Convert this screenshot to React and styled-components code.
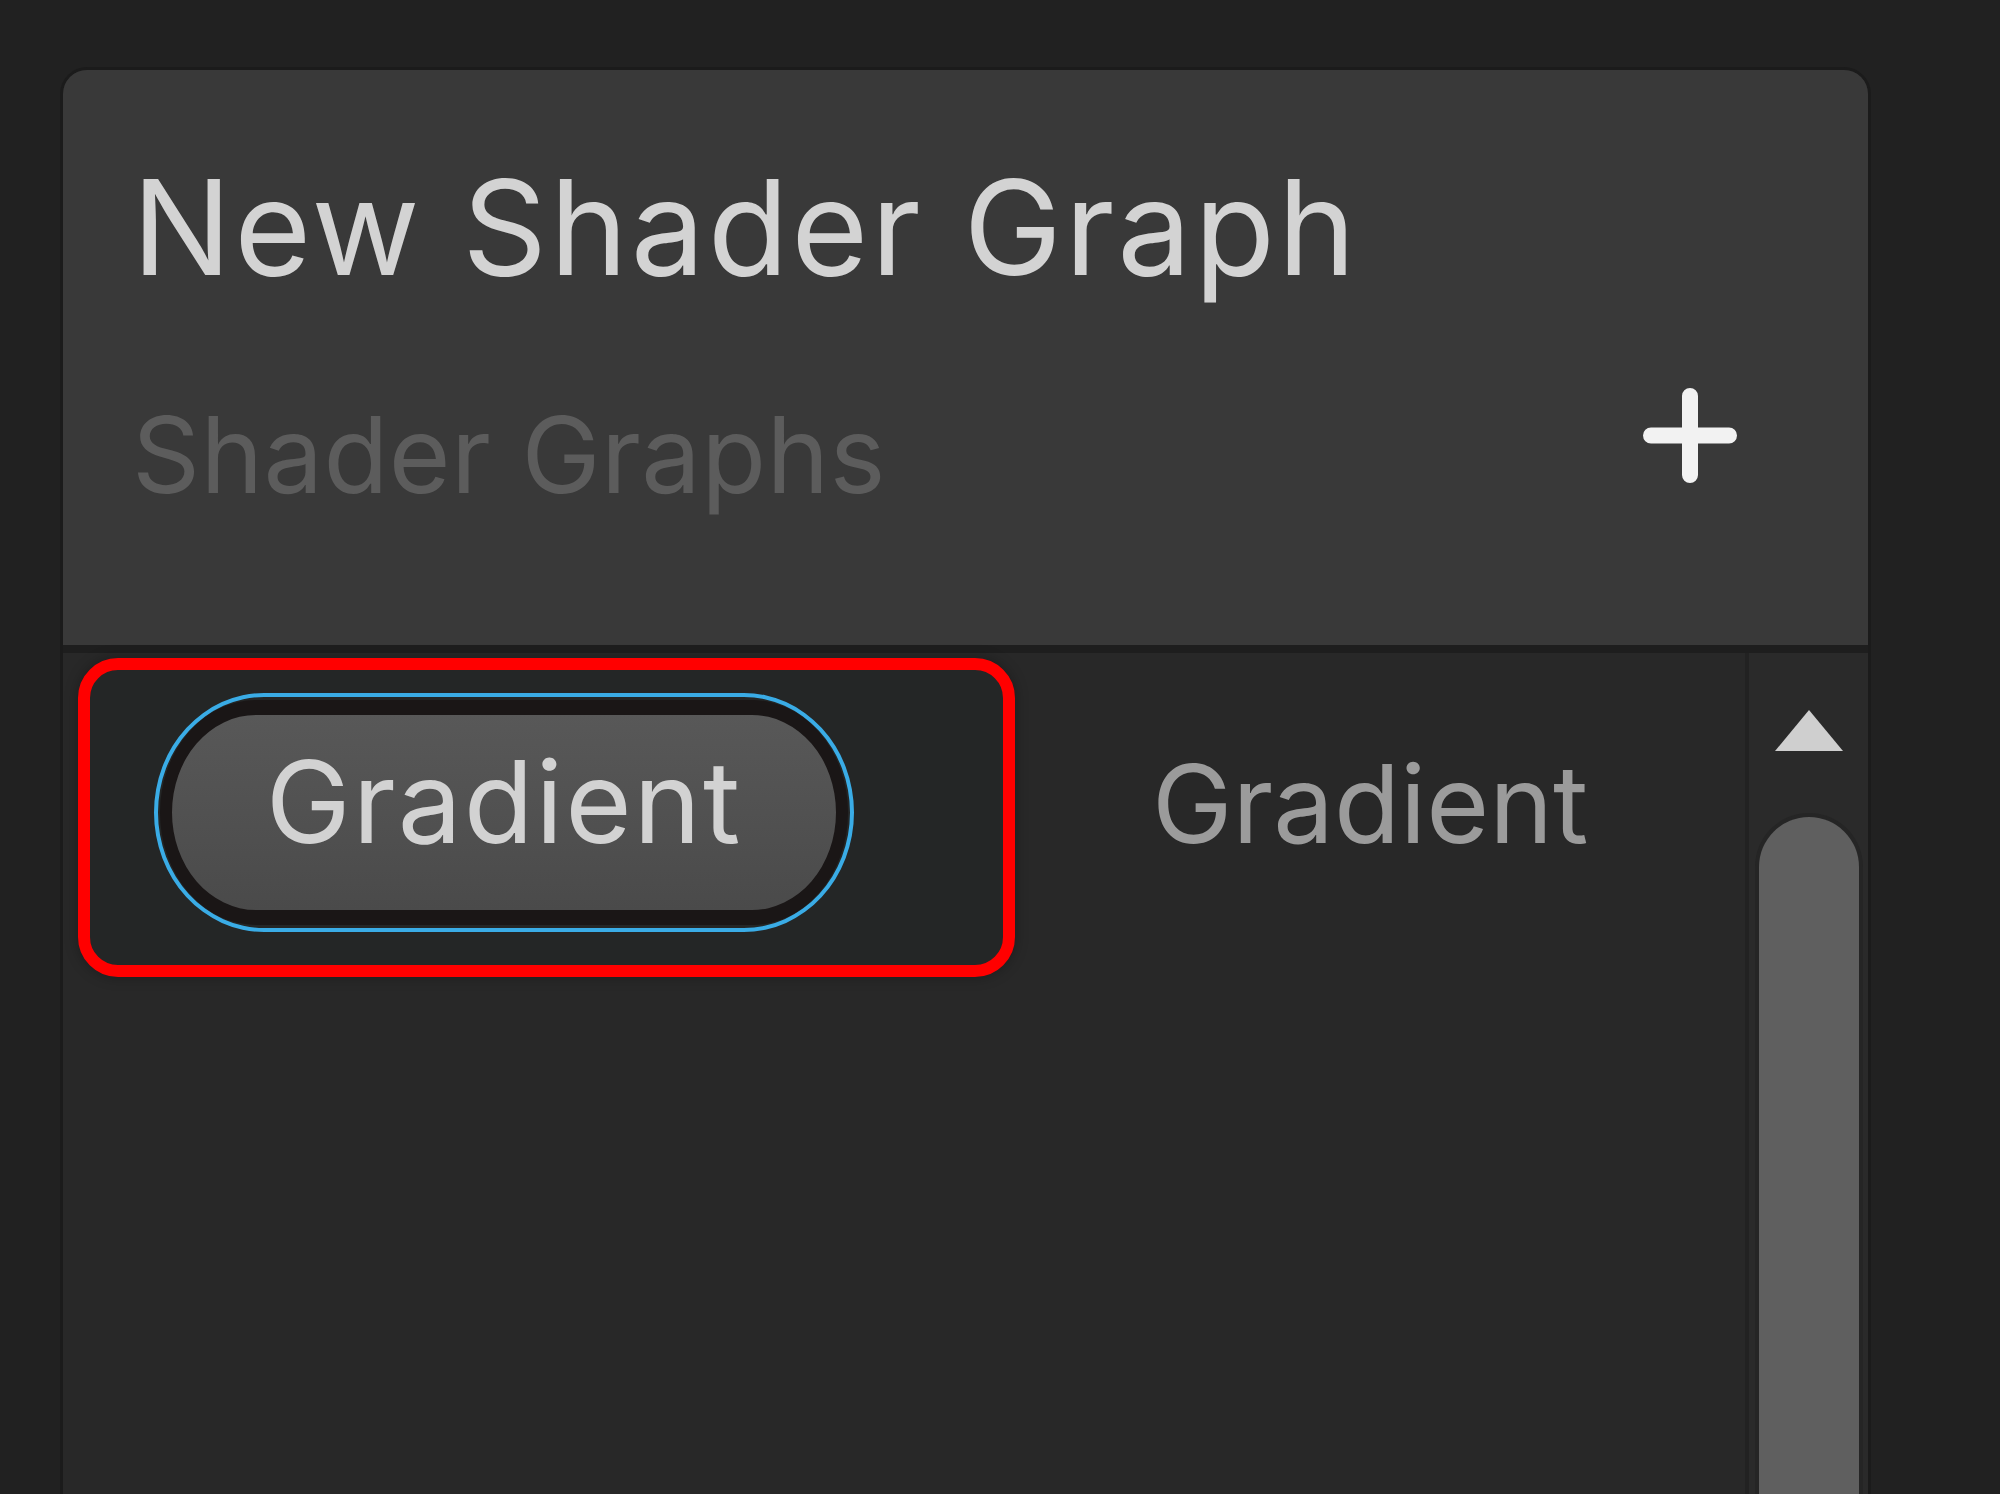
import React from 'react'
import styled, { createGlobalStyle } from 'styled-components'

const GlobalStyle = createGlobalStyle`
  html, body {
    margin: 0;
    padding: 0;
    background: #212121;
    font-family: Inter, "Noto Sans", sans-serif;
  }
`

const Page = styled.div`
  height: 100vh;
  box-sizing: border-box;
  padding: 67px 0 0 60px;
  overflow: hidden;
  display: flex;
`

const Panel = styled.div`
  width: 1811px;
  box-sizing: border-box;
  border: 3px solid #1b1b1b;
  border-bottom: none;
  border-radius: 27px 27px 0 0;
  display: flex;
  flex-direction: column;
  overflow: hidden;
`

const Header = styled.div`
  background: #393939;
  height: 583px;
  box-sizing: border-box;
  padding: 91px 0 0 69px;
  border-bottom: 8px solid #1e1e1e;
  flex-shrink: 0;
`

const Title = styled.div`
  font-size: 132px;
  line-height: 1;
  letter-spacing: 2.8px;
  color: #d3d3d3;
  white-space: nowrap;
`

const SubRow = styled.div`
  margin-top: 95px;
  display: flex;
  justify-content: space-between;
  align-items: flex-start;
`

const SubTitle = styled.div`
  margin-top: 14px;
  font-size: 106px;
  line-height: 1;
  letter-spacing: 0.4px;
  color: #5c5c5c;
  white-space: nowrap;
`

const AddButton = styled.svg`
  width: 94px;
  height: 95px;
  margin-right: 131px;
  flex-shrink: 0;
`

const Content = styled.div`
  flex: 1;
  display: flex;
  background: #282828;
  min-height: 0;
`

const List = styled.div`
  flex: 1;
  display: flex;
  align-items: flex-start;
`

const Row = styled.div`
  display: flex;
  align-items: flex-start;
  margin-top: 5px;
`

// red annotation frame round the selected item
const Cell = styled.div`
  margin-left: 15px;
  width: 937px;
  height: 319px;
  box-sizing: border-box;
  border: 12px solid #ff0000;
  border-radius: 40px;
  padding: 23px 0 0 64px;
  background: #242626;
  box-shadow: 0 0 14px rgba(0, 0, 0, 0.3);
`

const FocusRing = styled.div`
  display: inline-flex;
  padding: 3px 2px;
  border: 4px solid #3aace6;
  border-radius: 110px / 50%;
`

const Pill = styled.div`
  width: 688px;
  height: 225px;
  box-sizing: border-box;
  border: 14px solid #1a1616;
  border-width: 15px 12px;
  border-radius: 96px / 50%;
  background: linear-gradient(#585858, #4a4a4a);
  display: flex;
  align-items: center;
  justify-content: center;
  padding-bottom: 22px;
  font-size: 114px;
  line-height: 1;
  letter-spacing: 2px;
  color: #d2d2d2;
`

const Label = styled.div`
  margin: 92px 0 0 137px;
  font-size: 108px;
  line-height: 1;
  color: #9b9b9b;
`

const ScrollColumn = styled.div`
  width: 123px;
  box-sizing: border-box;
  border-left: 4px solid #222222;
  background: #2a2a2a;
  display: flex;
  flex-direction: column;
  align-items: center;
`

const UpArrow = styled.svg`
  width: 72px;
  height: 45px;
  margin-top: 55px;
  flex-shrink: 0;
`

const Thumb = styled.div`
  flex: 1;
  width: 100px;
  margin-top: 64px;
  background: #5f5f5f;
  border-radius: 50px 50px 0 0;
  box-shadow: 0 0 0 4px #252525;
`

export default function App() {
  return (
    <>
      <GlobalStyle />
      <Page>
        <Panel>
          <Header>
            <Title>New Shader Graph</Title>
            <SubRow>
              <SubTitle>Shader Graphs</SubTitle>
              <AddButton viewBox="0 0 94 95">
                <path d="M47 8 V87 M8 47.5 H86" stroke="#f2f2f2" strokeWidth="16" strokeLinecap="round" fill="none" />
              </AddButton>
            </SubRow>
          </Header>
          <Content>
            <List>
              <Row>
                <Cell>
                  <FocusRing>
                    <Pill>Gradient</Pill>
                  </FocusRing>
                </Cell>
                <Label>Gradient</Label>
              </Row>
            </List>
            <ScrollColumn>
              <UpArrow viewBox="0 0 72 45">
                <path d="M36 2 L70 43 H2 Z" fill="#cfcfcf" />
              </UpArrow>
              <Thumb />
            </ScrollColumn>
          </Content>
        </Panel>
      </Page>
    </>
  )
}
